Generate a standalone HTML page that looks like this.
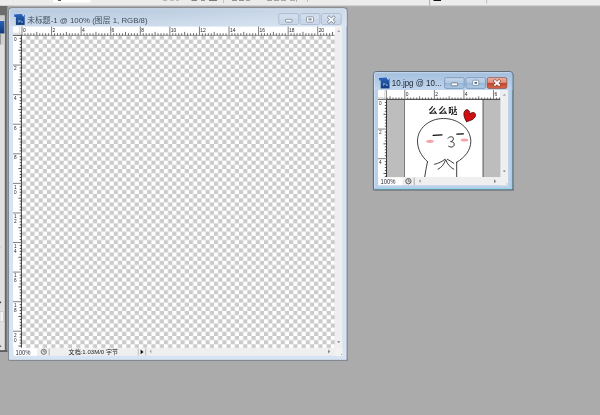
<!DOCTYPE html>
<html lang="zh-CN"><head><meta charset="utf-8"><title>Photoshop</title>
<style>
html,body{margin:0;padding:0;background:#ababab;overflow:hidden}
body{width:600px;height:415px;position:relative;font-family:"Liberation Sans","Noto Sans CJK SC",sans-serif}
svg{position:absolute;left:0;top:0;display:block;filter:blur(0.35px)}
text{white-space:pre}
</style></head><body>
<svg width="600" height="415" viewBox="0 0 600 415">
<defs>
<pattern id="chk" x="22" y="35.5" width="8.346" height="8.346" patternUnits="userSpaceOnUse">
<rect width="8.346" height="8.346" fill="#ffffff"/>
<rect x="4.173" y="0" width="4.173" height="4.173" fill="#cacaca"/>
<rect x="0" y="4.173" width="4.173" height="4.173" fill="#cacaca"/>
</pattern>
<linearGradient id="psg" x1="0" y1="0" x2="0" y2="1"><stop offset="0" stop-color="#2a62b4"/><stop offset="1" stop-color="#123a7c"/></linearGradient>
<linearGradient id="tinact" x1="0" y1="0" x2="0" y2="1"><stop offset="0" stop-color="#b7cadf"/><stop offset="1" stop-color="#cedbeb"/></linearGradient>
<linearGradient id="hl" x1="0" y1="0" x2="1" y2="0"><stop offset="0" stop-color="#ffffff" stop-opacity="0"/><stop offset="0.45" stop-color="#ffffff" stop-opacity="0.04"/><stop offset="1" stop-color="#ffffff" stop-opacity="0.3"/></linearGradient>
<linearGradient id="tact" x1="0" y1="0" x2="0" y2="1"><stop offset="0" stop-color="#a3bfdf"/><stop offset="1" stop-color="#c2d6ed"/></linearGradient>
<linearGradient id="btnact" x1="0" y1="0" x2="0" y2="1"><stop offset="0" stop-color="#c4d6ea"/><stop offset="0.48" stop-color="#b1c8e2"/><stop offset="0.52" stop-color="#9bb7d8"/><stop offset="1" stop-color="#aecbe6"/></linearGradient>
<linearGradient id="btnred" x1="0" y1="0" x2="0" y2="1"><stop offset="0" stop-color="#ecb8ab"/><stop offset="0.46" stop-color="#dd8a78"/><stop offset="0.54" stop-color="#c4442b"/><stop offset="1" stop-color="#d8684d"/></linearGradient>
<linearGradient id="topfade" x1="0" y1="0" x2="0" y2="1"><stop offset="0" stop-color="#ececec"/><stop offset="1" stop-color="#ababab"/></linearGradient>
<linearGradient id="shadowtop" x1="0" y1="0" x2="0" y2="1"><stop offset="0" stop-color="#ababab"/><stop offset="1" stop-color="#8e8e8e"/></linearGradient>
<clipPath id="tclip"><rect x="390" y="74" width="50.8" height="16"/></clipPath>
<clipPath id="cv2"><rect x="387" y="99.5" width="113.5" height="77.5"/></clipPath>
</defs>

<rect width="600" height="415" fill="#ababab"/>
<rect x="0" y="0" width="600" height="5.6" fill="#ececec"/>
<rect x="0" y="5.6" width="600" height="0.6" fill="#cfcfcf"/>
<rect x="53" y="0" width="37.5" height="2.6" fill="#ffffff"/>
<rect x="58" y="0" width="3" height="0.9" fill="#444"/>
<rect x="13" y="0" width="0.7" height="5.2" fill="#d4d4d4"/>
<rect x="13.7" y="0" width="0.7" height="5.2" fill="#f8f8f8"/>
<rect x="429.3" y="0" width="0.8" height="5.2" fill="#9a9a9a"/>
<rect x="486.4" y="0" width="0.7" height="3.4" fill="#a5a5a5"/>
<rect x="433.5" y="0" width="7.5" height="1" fill="#111"/>
<rect x="163" y="0" width="4" height="0.9" fill="#b0b0b0"/>
<rect x="170" y="0" width="4" height="0.9" fill="#b8b8b8"/>
<rect x="176" y="0" width="3" height="0.9" fill="#b8b8b8"/>
<rect x="191.5" y="0" width="5.5" height="0.9" fill="#777"/>
<rect x="201" y="0" width="4" height="0.9" fill="#8a8a8a"/>
<rect x="209" y="0" width="8" height="0.9" fill="#6e6e6e"/>
<rect x="232" y="0" width="5" height="0.9" fill="#8c8c8c"/>
<rect x="239" y="0" width="5" height="0.9" fill="#8c8c8c"/>
<rect x="246" y="0" width="4" height="0.9" fill="#999"/>
<rect x="267" y="0" width="5" height="0.9" fill="#9a9a9a"/>
<rect x="274" y="0" width="5" height="0.9" fill="#9a9a9a"/>
<rect x="281" y="0" width="5" height="0.9" fill="#a2a2a2"/>
<rect x="290" y="0" width="5" height="0.9" fill="#a8a8a8"/>
<rect x="223" y="0" width="0.7" height="3.2" fill="#b4b4b4"/>
<rect x="296.3" y="0" width="0.7" height="1.6" fill="#8a8a8a"/>
<rect x="307" y="0" width="0.7" height="1.6" fill="#9a9a9a"/>
<rect x="0" y="6" width="7.4" height="346" fill="#6c6c6c"/>
<rect x="0" y="15.5" width="4.9" height="335" fill="#e0e0e0"/>
<rect x="0" y="15.5" width="4.9" height="5" fill="#cdcdcd"/>
<rect x="0" y="21" width="4.4" height="12.5" fill="url(#psg)"/>
<rect x="4.9" y="15.5" width="0.9" height="335" fill="#585858"/>
<rect x="5.8" y="15.5" width="0.7" height="335" fill="#8c8c8c"/>
<rect x="7.4" y="8" width="1.3" height="344" fill="#a4a4a4"/>
<rect x="0" y="350.2" width="7.4" height="1.7" fill="#5e5e5e"/>
<rect x="0" y="34" width="4.9" height="10.5" fill="#cfcfcf"/>
<rect x="0" y="34" width="0.8" height="10.5" fill="#8a8a8a"/>
<path d="M0 301.2 L1.3 302.3 L0 303.4 Z" fill="#222"/>
<rect x="0" y="345.6" width="1.2" height="1.2" fill="#444"/>
<rect x="0" y="246.6" width="2" height="0.6" fill="#bdbdbd"/>
<rect x="0" y="311.8" width="3.6" height="10" fill="#f6f6f6" stroke="#b5b5b5" stroke-width="0.5"/>
<rect x="8.1" y="6.4" width="339.8" height="3" fill="url(#shadowtop)" rx="2"/>
<rect x="9.899999999999999" y="359.2" width="338.2" height="1.8" fill="#959595"/>
<rect x="345.9" y="10.0" width="1.8" height="351.2" fill="#959595"/>
<path d="M8.7 360.2 V11.0 Q8.7 8.0 11.7 8.0 H343.9 Q346.9 8.0 346.9 11.0 V360.2 Z" fill="#d5e3f3" stroke="#6b7480" stroke-width="0.85"/>
<path d="M9.1 26.6 V11.0 Q9.1 8.4 11.7 8.4 H343.9 Q346.5 8.4 346.5 11.0 V26.6 Z" fill="url(#tinact)"/>
<path d="M9.1 26.6 V11.0 Q9.1 8.4 11.7 8.4 H343.9 Q346.5 8.4 346.5 11.0 V26.6 Z" fill="url(#hl)"/>
<path d="M9.5 359.4 V11.0 Q9.5 8.8 11.7 8.8 H343.9 Q346.09999999999997 8.8 346.09999999999997 11.0 V359.4 Z" fill="none" stroke="#eaf2fb" stroke-width="0.6" opacity="0.8"/>
<g transform="translate(14 13.9)">
<path d="M0 0.5 L7.6 0 L8.4 0.8 L8.4 3.2 L0.4 3.2 Z" fill="#2563cf"/>
<rect x="1.9" y="0.9" width="8.8" height="10.1" fill="url(#psg)"/>
<path d="M7.8 0.6 L9.8 0.9 L9.9 2.9 Z" fill="#eef3fa"/>
<text x="4.3" y="9" font-size="3.9" font-weight="bold" fill="#9db9df" font-family="Liberation Sans, sans-serif">Ps</text>
</g>
<text x="27.2" y="22.8" font-size="7.9" fill="#3f4c60" textLength="120.4" lengthAdjust="spacingAndGlyphs" font-family="Liberation Sans, Noto Sans CJK SC, sans-serif">未标题-1 @ 100% (图层 1, RGB/8)</text>
<rect x="278.8" y="13.5" width="19.8" height="11" rx="1.6" fill="#c9d7e8" stroke="#a3b4c9" stroke-width="0.7"/>
<rect x="279.5" y="14.2" width="18.4" height="4.8" rx="1" fill="#d2deec" opacity="0.8"/>
<rect x="285.5" y="19.3" width="6.4" height="2.8" rx="0.5" fill="#fbfcfe" stroke="#6f7a88" stroke-width="0.7"/>
<rect x="300.1" y="13.5" width="19.8" height="11" rx="1.6" fill="#c9d7e8" stroke="#a3b4c9" stroke-width="0.7"/>
<rect x="300.8" y="14.2" width="18.4" height="4.8" rx="1" fill="#d2deec" opacity="0.8"/>
<rect x="306.5" y="16.8" width="7" height="5.4" rx="0.9" fill="#fbfcfe" stroke="#6f7a88" stroke-width="0.7"/>
<rect x="308.3" y="18.3" width="3.4" height="2.3" rx="0.4" fill="#8f9bab"/>
<rect x="321.4" y="13.5" width="19.8" height="11" rx="1.6" fill="#c9d7e8" stroke="#a3b4c9" stroke-width="0.7"/>
<rect x="322.09999999999997" y="14.2" width="18.4" height="4.8" rx="1" fill="#d2deec" opacity="0.8"/>
<path d="M328.99999999999994 17.4 L333.59999999999997 21.8 M333.59999999999997 17.4 L328.99999999999994 21.8" stroke="#7a8594" stroke-width="3" stroke-linecap="square"/>
<path d="M328.99999999999994 17.4 L333.59999999999997 21.8 M333.59999999999997 17.4 L328.99999999999994 21.8" stroke="#fbfcfe" stroke-width="1.8" stroke-linecap="square"/>
<rect x="13" y="26.6" width="322" height="8.9" fill="#ffffff"/>
<rect x="13" y="26.6" width="8.6" height="321.4" fill="#ffffff"/>
<path d="M13 35.3 H22" stroke="#1a1a1a" stroke-width="0.9" fill="none"/>
<path d="M19.4 26.6 V34.8 M13 33.2 H21.3" stroke="#bdbdbd" stroke-width="0.6" fill="none"/>
<rect x="22" y="35.5" width="313" height="312.6" fill="url(#chk)"/>
<path d="M21.4 34.9 V347.8" stroke="#1a1a1a" stroke-width="0.85"/>
<path d="M22 35.35 H334.6" stroke="#555" stroke-width="0.6"/>
<path d="M22.00 26.60V35.50M51.57 26.60V35.50M81.15 26.60V35.50M110.72 26.60V35.50M140.30 26.60V35.50M169.87 26.60V35.50M199.44 26.60V35.50M229.02 26.60V35.50M258.59 26.60V35.50M288.17 26.60V35.50M317.74 26.60V35.50" stroke="#5c5c5c" stroke-width="0.8" fill="none"/>
<path d="M36.79 31.90V35.50M66.36 31.90V35.50M95.94 31.90V35.50M125.51 31.90V35.50M155.08 31.90V35.50M184.66 31.90V35.50M214.23 31.90V35.50M243.81 31.90V35.50M273.38 31.90V35.50M302.95 31.90V35.50M332.53 31.90V35.50" stroke="#2e2e2e" stroke-width="0.7" fill="none"/>
<path d="M24.96 33.20V35.50M27.91 33.20V35.50M30.87 33.20V35.50M33.83 33.20V35.50M39.74 33.20V35.50M42.70 33.20V35.50M45.66 33.20V35.50M48.62 33.20V35.50M54.53 33.20V35.50M57.49 33.20V35.50M60.45 33.20V35.50M63.40 33.20V35.50M69.32 33.20V35.50M72.28 33.20V35.50M75.23 33.20V35.50M78.19 33.20V35.50M84.11 33.20V35.50M87.06 33.20V35.50M90.02 33.20V35.50M92.98 33.20V35.50M98.89 33.20V35.50M101.85 33.20V35.50M104.81 33.20V35.50M107.76 33.20V35.50M113.68 33.20V35.50M116.64 33.20V35.50M119.59 33.20V35.50M122.55 33.20V35.50M128.47 33.20V35.50M131.42 33.20V35.50M134.38 33.20V35.50M137.34 33.20V35.50M143.25 33.20V35.50M146.21 33.20V35.50M149.17 33.20V35.50M152.13 33.20V35.50M158.04 33.20V35.50M161.00 33.20V35.50M163.96 33.20V35.50M166.91 33.20V35.50M172.83 33.20V35.50M175.78 33.20V35.50M178.74 33.20V35.50M181.70 33.20V35.50M187.61 33.20V35.50M190.57 33.20V35.50M193.53 33.20V35.50M196.49 33.20V35.50M202.40 33.20V35.50M205.36 33.20V35.50M208.32 33.20V35.50M211.27 33.20V35.50M217.19 33.20V35.50M220.15 33.20V35.50M223.10 33.20V35.50M226.06 33.20V35.50M231.98 33.20V35.50M234.93 33.20V35.50M237.89 33.20V35.50M240.85 33.20V35.50M246.76 33.20V35.50M249.72 33.20V35.50M252.68 33.20V35.50M255.63 33.20V35.50M261.55 33.20V35.50M264.51 33.20V35.50M267.46 33.20V35.50M270.42 33.20V35.50M276.34 33.20V35.50M279.29 33.20V35.50M282.25 33.20V35.50M285.21 33.20V35.50M291.12 33.20V35.50M294.08 33.20V35.50M297.04 33.20V35.50M300.00 33.20V35.50M305.91 33.20V35.50M308.87 33.20V35.50M311.83 33.20V35.50M314.78 33.20V35.50M320.70 33.20V35.50M323.65 33.20V35.50M326.61 33.20V35.50M329.57 33.20V35.50" stroke="#383838" stroke-width="0.7" fill="none"/>
<g font-size="4.9" fill="#25252c" font-family="Liberation Sans, sans-serif"><text x="22.90" y="32.31">0</text><text x="52.47" y="32.31">2</text><text x="82.05" y="32.31">4</text><text x="111.62" y="32.31">6</text><text x="141.20" y="32.31">8</text><text x="170.77" y="32.31">10</text><text x="200.34" y="32.31">12</text><text x="229.92" y="32.31">14</text><text x="259.49" y="32.31">16</text><text x="289.07" y="32.31">18</text><text x="318.64" y="32.31">20</text></g>
<path d="M13.00 35.50H21.60M13.00 65.07H21.60M13.00 94.65H21.60M13.00 124.22H21.60M13.00 153.80H21.60M13.00 183.37H21.60M13.00 212.94H21.60M13.00 242.52H21.60M13.00 272.09H21.60M13.00 301.67H21.60M13.00 331.24H21.60" stroke="#6a6a6a" stroke-width="0.85" fill="none"/>
<path d="M18.40 50.29H21.60M18.40 79.86H21.60M18.40 109.44H21.60M18.40 139.01H21.60M18.40 168.58H21.60M18.40 198.16H21.60M18.40 227.73H21.60M18.40 257.31H21.60M18.40 286.88H21.60M18.40 316.45H21.60M18.40 346.03H21.60" stroke="#2a2a2a" stroke-width="0.8" fill="none"/>
<path d="M19.70 38.46H21.60M19.70 41.41H21.60M19.70 44.37H21.60M19.70 47.33H21.60M19.70 53.24H21.60M19.70 56.20H21.60M19.70 59.16H21.60M19.70 62.12H21.60M19.70 68.03H21.60M19.70 70.99H21.60M19.70 73.95H21.60M19.70 76.90H21.60M19.70 82.82H21.60M19.70 85.78H21.60M19.70 88.73H21.60M19.70 91.69H21.60M19.70 97.61H21.60M19.70 100.56H21.60M19.70 103.52H21.60M19.70 106.48H21.60M19.70 112.39H21.60M19.70 115.35H21.60M19.70 118.31H21.60M19.70 121.26H21.60M19.70 127.18H21.60M19.70 130.14H21.60M19.70 133.09H21.60M19.70 136.05H21.60M19.70 141.97H21.60M19.70 144.92H21.60M19.70 147.88H21.60M19.70 150.84H21.60M19.70 156.75H21.60M19.70 159.71H21.60M19.70 162.67H21.60M19.70 165.63H21.60M19.70 171.54H21.60M19.70 174.50H21.60M19.70 177.46H21.60M19.70 180.41H21.60M19.70 186.33H21.60M19.70 189.28H21.60M19.70 192.24H21.60M19.70 195.20H21.60M19.70 201.11H21.60M19.70 204.07H21.60M19.70 207.03H21.60M19.70 209.99H21.60M19.70 215.90H21.60M19.70 218.86H21.60M19.70 221.82H21.60M19.70 224.77H21.60M19.70 230.69H21.60M19.70 233.65H21.60M19.70 236.60H21.60M19.70 239.56H21.60M19.70 245.48H21.60M19.70 248.43H21.60M19.70 251.39H21.60M19.70 254.35H21.60M19.70 260.26H21.60M19.70 263.22H21.60M19.70 266.18H21.60M19.70 269.13H21.60M19.70 275.05H21.60M19.70 278.01H21.60M19.70 280.96H21.60M19.70 283.92H21.60M19.70 289.84H21.60M19.70 292.79H21.60M19.70 295.75H21.60M19.70 298.71H21.60M19.70 304.62H21.60M19.70 307.58H21.60M19.70 310.54H21.60M19.70 313.50H21.60M19.70 319.41H21.60M19.70 322.37H21.60M19.70 325.33H21.60M19.70 328.28H21.60M19.70 334.20H21.60M19.70 337.15H21.60M19.70 340.11H21.60M19.70 343.07H21.60" stroke="#2e2e2e" stroke-width="0.8" fill="none"/>
<g font-size="4.7" fill="#25252c" font-family="Liberation Sans, sans-serif"><text x="14.00" y="40.80">0</text><text x="14.00" y="70.37">2</text><text x="14.00" y="99.95">4</text><text x="14.00" y="129.52">6</text><text x="14.00" y="159.10">8</text><text x="14.00" y="188.67">1</text><text x="14.00" y="193.67">0</text><text x="14.00" y="218.24">1</text><text x="14.00" y="223.24">2</text><text x="14.00" y="247.82">1</text><text x="14.00" y="252.82">4</text><text x="14.00" y="277.39">1</text><text x="14.00" y="282.39">6</text><text x="14.00" y="306.97">1</text><text x="14.00" y="311.97">8</text><text x="14.00" y="336.54">2</text><text x="14.00" y="341.54">0</text></g>
<rect x="335" y="26" width="7.3" height="330" fill="#efefef"/>
<rect x="13" y="347.8" width="329.3" height="7.9" fill="#efefef"/>
<rect x="335" y="347.8" width="7.3" height="7.9" fill="#f2f2f2"/>
<path d="M337.2 31.8 L338.7 30.2 L340.2 31.8 Z" fill="#8a8a8a"/>
<path d="M337.2 341.3 L340.2 341.3 L338.7 343.1 Z" fill="#7a7a7a"/>
<path d="M328 349.6 L330.3 351.6 L328 353.6 Z" fill="#8a8a8a"/>
<path d="M151.3 349.8 L149.6 351.5 L151.3 353.2 Z" fill="#9a9a9a"/>
<rect x="341" y="354" width="0.8" height="0.8" fill="#777"/>
<rect x="14" y="348.4" width="23" height="7.2" fill="#ffffff"/>
<text x="15.4" y="354.5" font-size="6.5" fill="#2c2c3a" textLength="15" lengthAdjust="spacingAndGlyphs" font-family="Liberation Sans, sans-serif">100%</text>
<circle cx="43.8" cy="351.8" r="2.6" fill="#dcdcdc" stroke="#666" stroke-width="0.85"/>
<path d="M43.8 350 V351.9 H45.6" stroke="#555" stroke-width="0.6" fill="none"/>
<path d="M49.2 348.6 V355.4" stroke="#8f8f8f" stroke-width="0.7"/>
<text x="68.6" y="354.1" font-size="6.2" fill="#222" textLength="49.4" lengthAdjust="spacingAndGlyphs" font-family="Liberation Sans, Noto Sans CJK SC, sans-serif">文档:1.03M/0 字节</text>
<path d="M138.3 348.6 V355.4 M145.7 348.6 V355.4" stroke="#9a9a9a" stroke-width="0.6"/>
<path d="M140.6 349.6 L143.6 351.9 L140.6 354.2 Z" fill="#111"/>
<rect x="374.79999999999995" y="189.20000000000002" width="139.39999999999998" height="1.6" fill="#8f8f8f"/>
<rect x="512.1999999999999" y="73.6" width="1.6" height="117.20000000000002" fill="#8f8f8f"/>
<path d="M373.4 189.8 V74.6 Q373.4 71.6 376.4 71.6 H509.79999999999995 Q512.8 71.6 512.8 74.6 V189.8 Z" fill="#b9d0ea" stroke="#4e5a66" stroke-width="0.9"/>
<path d="M373.84999999999997 90 V74.6 Q373.84999999999997 72.05 376.4 72.05 H509.79999999999995 Q512.3499999999999 72.05 512.3499999999999 74.6 V90 Z" fill="url(#tact)"/>
<path d="M374.5 188.70000000000002 H511.69999999999993 V75.6" stroke="#7fd8ea" stroke-width="0.8" fill="none"/>
<path d="M374.5 187.8 V74.6 Q374.5 72.69999999999999 376.4 72.69999999999999 H509.79999999999995" stroke="#dbe9f7" stroke-width="0.7" fill="none" opacity="0.9"/>
<g transform="translate(378.8 77.4)">
<path d="M0 0.5 L7.6 0 L8.4 0.8 L8.4 3.2 L0.4 3.2 Z" fill="#2563cf"/>
<rect x="1.9" y="0.9" width="8.8" height="10.1" fill="url(#psg)"/>
<path d="M7.8 0.6 L9.8 0.9 L9.9 2.9 Z" fill="#eef3fa"/>
<text x="4.3" y="9" font-size="3.9" font-weight="bold" fill="#9db9df" font-family="Liberation Sans, sans-serif">Ps</text>
</g>
<text x="391.8" y="86.2" font-size="9" fill="#1d2430" textLength="49.8" clip-path="url(#tclip)" lengthAdjust="spacingAndGlyphs" font-family="Liberation Sans, sans-serif">10.jpg @ 10...</text>
<rect x="444.6" y="77.6" width="19.6" height="10.8" rx="1.6" fill="url(#btnact)" stroke="#6f8cb0" stroke-width="0.7"/>
<rect x="451.20000000000005" y="82.9" width="6.4" height="2.9" rx="0.5" fill="#ffffff" stroke="#4f5f75" stroke-width="0.7"/>
<rect x="465.9" y="77.6" width="19.6" height="10.8" rx="1.6" fill="url(#btnact)" stroke="#6f8cb0" stroke-width="0.7"/>
<rect x="472.7" y="80.2" width="6" height="5.2" rx="0.6" fill="#ffffff" stroke="#5b6b80" stroke-width="0.6"/>
<rect x="474.5" y="81.9" width="2.6" height="1.9" fill="#4f6f9f"/>
<rect x="487.2" y="77.6" width="19.6" height="10.8" rx="1.6" fill="url(#btnred)" stroke="#8c4a40" stroke-width="0.7"/>
<path d="M494.9 81 L499.1 85 M499.1 81 L494.9 85" stroke="#7a3a30" stroke-width="2.9" stroke-linecap="square"/>
<path d="M494.9 81 L499.1 85 M499.1 81 L494.9 85" stroke="#ffffff" stroke-width="1.8" stroke-linecap="square"/>
<rect x="378" y="90" width="122.5" height="9.5" fill="#ffffff"/>
<rect x="378" y="90" width="8.8" height="87" fill="#ffffff"/>
<path d="M378 99.2 H387 M386.4 90 V99.5" stroke="#555" stroke-width="0.7" fill="none"/>
<path d="M384.7 90 V99.2 M378 97.6 H386.4" stroke="#c4c4c4" stroke-width="0.6" fill="none"/>
<rect x="387" y="99.5" width="113.5" height="77.5" fill="#bdbdbd"/>
<rect x="404.7" y="99.5" width="77.9" height="77.5" fill="#ffffff"/>
<path d="M404.5 99.5 V177" stroke="#555" stroke-width="0.7"/>
<path d="M483.15 99.5 V177" stroke="#6e6e6e" stroke-width="1.1"/>
<path d="M386.5 99.5 V177" stroke="#222" stroke-width="0.9"/>
<path d="M387 99.3 H500.3" stroke="#222" stroke-width="0.9"/>
<path d="M404.80 90.00V99.50M434.37 90.00V99.50M463.95 90.00V99.50M493.52 90.00V99.50" stroke="#5c5c5c" stroke-width="0.8" fill="none"/>
<path d="M390.01 96.30V99.50M419.59 96.30V99.50M449.16 96.30V99.50M478.74 96.30V99.50" stroke="#2e2e2e" stroke-width="0.7" fill="none"/>
<path d="M387.06 97.50V99.50M392.97 97.50V99.50M395.93 97.50V99.50M398.89 97.50V99.50M401.84 97.50V99.50M407.76 97.50V99.50M410.71 97.50V99.50M413.67 97.50V99.50M416.63 97.50V99.50M422.54 97.50V99.50M425.50 97.50V99.50M428.46 97.50V99.50M431.42 97.50V99.50M437.33 97.50V99.50M440.29 97.50V99.50M443.25 97.50V99.50M446.20 97.50V99.50M452.12 97.50V99.50M455.08 97.50V99.50M458.03 97.50V99.50M460.99 97.50V99.50M466.91 97.50V99.50M469.86 97.50V99.50M472.82 97.50V99.50M475.78 97.50V99.50M481.69 97.50V99.50M484.65 97.50V99.50M487.61 97.50V99.50M490.56 97.50V99.50M496.48 97.50V99.50M499.44 97.50V99.50" stroke="#383838" stroke-width="0.7" fill="none"/>
<g font-size="4.9" fill="#25252c" font-family="Liberation Sans, sans-serif"><text x="405.70" y="95.71">0</text><text x="435.27" y="95.71">2</text><text x="464.85" y="95.71">4</text><text x="494.42" y="95.71">6</text></g>
<path d="M378.00 99.50H386.70M378.00 129.07H386.70M378.00 158.65H386.70" stroke="#6a6a6a" stroke-width="0.85" fill="none"/>
<path d="M383.50 114.29H386.70M383.50 143.86H386.70M383.50 173.44H386.70" stroke="#2a2a2a" stroke-width="0.8" fill="none"/>
<path d="M384.80 102.46H386.70M384.80 105.41H386.70M384.80 108.37H386.70M384.80 111.33H386.70M384.80 117.24H386.70M384.80 120.20H386.70M384.80 123.16H386.70M384.80 126.12H386.70M384.80 132.03H386.70M384.80 134.99H386.70M384.80 137.95H386.70M384.80 140.90H386.70M384.80 146.82H386.70M384.80 149.78H386.70M384.80 152.73H386.70M384.80 155.69H386.70M384.80 161.61H386.70M384.80 164.56H386.70M384.80 167.52H386.70M384.80 170.48H386.70M384.80 176.39H386.70" stroke="#2e2e2e" stroke-width="0.8" fill="none"/>
<g font-size="4.7" fill="#25252c" font-family="Liberation Sans, sans-serif"><text x="379.00" y="104.80">0</text><text x="379.00" y="134.37">2</text><text x="379.00" y="163.95">4</text></g>
<g clip-path="url(#cv2)" fill="none" stroke="#1c1c1c" stroke-width="0.85" stroke-linecap="round" stroke-linejoin="round">
<path d="M427.5 161.6 C421.2 156 417.5 149 417.5 141 C417.5 128.6 428.9 118.5 443.5 118.5 C458.6 118.5 470.8 128.8 470.8 141.5 C470.8 150 465 157.5 456.7 162.2"/>
<path d="M427.5 161.6 C426.4 167 425.4 172 424.6 177.5"/>
<path d="M456.7 162.2 L456.7 177.5"/>
<path d="M433.1 135.3 L442 134.8" stroke="#0a0a0a" stroke-width="1.3"/>
<path d="M456.9 134.2 L463.4 133.8" stroke="#0a0a0a" stroke-width="1.3"/>
<path d="M448 138.2 C449.6 136 453.6 136.2 453.4 139 C453.3 140.6 451.8 141.4 450.6 141.6 C453 141.6 454.6 143 454.2 145 C453.8 147.2 450.4 147.8 448.6 146.2" stroke-width="0.9"/>
<path d="M434.5 164.3 C438.5 163.4 442 161.6 445 159.3"/>
<path d="M438 169.2 C441.6 167.4 444.2 164.2 445.6 159.9"/>
<path d="M447.4 159.3 C449.4 160.4 451.6 161.8 453.8 163.3"/>
<path d="M446 160.2 C447.2 164 450 167.2 453.8 169.2"/>
<ellipse cx="430" cy="141.3" rx="3.8" ry="1.6" fill="#f7a3a8" stroke="none"/>
<ellipse cx="464.5" cy="140" rx="3.8" ry="1.6" fill="#f7a3a8" stroke="none"/>
<path transform="translate(468.9 116.1) rotate(24)" d="M0 6 C-3.6 3.4 -6.3 0.4 -5.9 -2.8 C-5.5 -6 -1.2 -6.4 0 -1.9 C1.2 -6.4 5.5 -6 5.9 -2.8 C6.3 0.4 3.6 3.4 0 6 Z" fill="#d40f12" stroke="#4a0808" stroke-width="0.75"/>
</g>
<text x="428.2" y="114" font-size="9.1" font-weight="700" fill="#1a1a1a" font-family="Liberation Sans, Noto Sans CJK SC, sans-serif" textLength="29.2" lengthAdjust="spacing">么么哒</text>
<rect x="500.5" y="90" width="7.6" height="95.4" fill="#efefef"/>
<rect x="378" y="177" width="130" height="8.3" fill="#efefef"/>
<path d="M502.7 95.6 L504.3 94 L505.9 95.6 Z" fill="#8a8a8a"/>
<path d="M502.8 170.4 L505.8 170.4 L504.3 172.2 Z" fill="#7a7a7a"/>
<path d="M494 179.2 L496.3 181.2 L494 183.2 Z" fill="#8a8a8a"/>
<path d="M420.6 179.4 L418.9 181.1 L420.6 182.8 Z" fill="#8a8a8a"/>
<rect x="506.6" y="183.6" width="0.8" height="0.8" fill="#777"/>
<rect x="378.4" y="177.6" width="24" height="7.6" fill="#ffffff"/>
<text x="380.4" y="184" font-size="6.5" fill="#2c2c3a" textLength="15" lengthAdjust="spacingAndGlyphs" font-family="Liberation Sans, sans-serif">100%</text>
<circle cx="408.4" cy="181.2" r="2.7" fill="#dcdcdc" stroke="#555" stroke-width="0.9"/>
<path d="M408.4 179.3 V181.3 H410.2" stroke="#444" stroke-width="0.6" fill="none"/>
<path d="M414.2 177.6 V185" stroke="#8f8f8f" stroke-width="0.7"/>
</svg>
</body></html>
